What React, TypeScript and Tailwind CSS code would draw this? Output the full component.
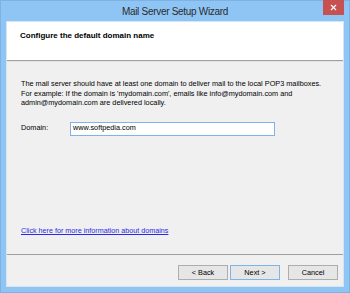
import { X } from "lucide-react";

const ui = { fontFamily: '"Liberation Sans", Arial, sans-serif' };

function WizButton({ label, primary }: { label: string; primary?: boolean }) {
  return (
    <button
      className={
        "w-[50px] h-[15px] flex items-center justify-center text-[7.3px] leading-none text-black bg-[#e6e6e6] border " +
        (primary ? "border-[#7fb5e6]" : "border-[#adadad]")
      }
    >
      {label}
    </button>
  );
}

export default function App() {
  return (
    <div
      className="w-[350px] h-[293px] bg-[#8fc5f5] flex flex-col px-[5px] pb-[5px] border border-[#7db2e2]"
      style={ui}
    >
      {/* title bar */}
      <div className="relative h-[20px] shrink-0 flex items-center justify-center">
        <span className="text-[10px] text-[#2b2b2b] tracking-[-0.3px]">Mail Server Setup Wizard</span>
        <div className="absolute -top-px right-0 w-[21px] h-[15px] bg-[#c75050] flex items-center justify-center">
          <X size={9} strokeWidth={3} color="#ffffff" />
        </div>
      </div>

      {/* client area */}
      <div className="flex-1 flex flex-col border border-[#d7e5f2] bg-[#f0f0f0]">
        <div className="h-[39px] shrink-0 bg-white border-b border-[#a0a0a0] px-[13px] pt-[8px]">
          <p className="text-[8px] font-bold text-black">Configure the default domain name</p>
        </div>
        <div className="border-t border-[#e3e3e3]" />

        <div className="flex-1 flex flex-col px-[14px] pt-[17px] text-black">
          <p className="text-[7.3px] leading-[9.5px] whitespace-nowrap">
            The mail server should have at least one domain to deliver mail to the local POP3 mailboxes.
            <br />
            For example: If the domain is 'mydomain.com', emails like info@mydomain.com and
            <br />
            admin@mydomain.com are delivered locally.
          </p>

          <div className="flex items-center mt-[14px]">
            <span className="text-[7.3px] w-[49px]">Domain:</span>
            <div className="w-[205px] h-[14px] bg-white border border-[#7eb4ea] flex items-center px-[2px] text-[7.3px]">
              www.softpedia.com
            </div>
          </div>

          <div className="flex-1" />
          <a className="text-[7.2px] text-[#2a2ae6] underline mb-[17px]" href="#">
            Click here for more information about domains
          </a>
        </div>

        <div className="h-[32px] shrink-0 border-t border-[#a0a0a0] flex items-start pt-[10px] pl-[171px]">
          <WizButton label="< Back" />
          <div className="w-[2px]" />
          <WizButton label="Next >" primary />
          <div className="w-[8px]" />
          <WizButton label="Cancel" />
        </div>
      </div>
    </div>
  );
}
